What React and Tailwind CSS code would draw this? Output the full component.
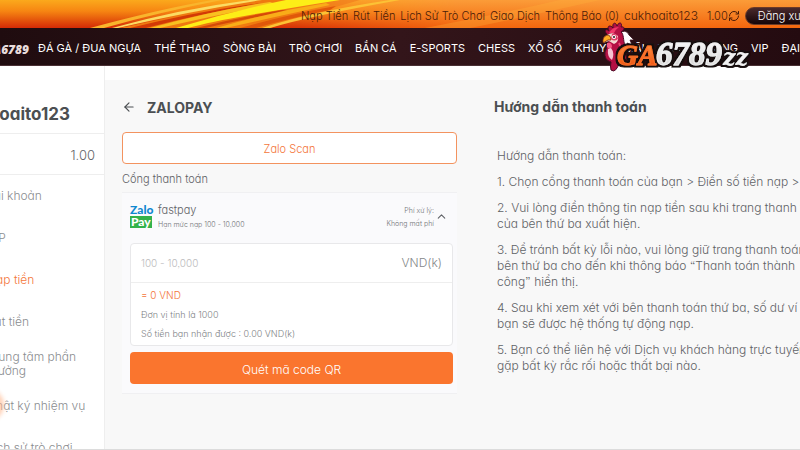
import { useState } from 'react';
import { ArrowLeft, ChevronUp, RefreshCw } from 'lucide-react';

const topLinks = ['Nạp Tiền', 'Rút Tiền', 'Lịch Sử Trò Chơi', 'Giao Dịch', 'Thông Báo (0)'];

const navLinks = [
  'ĐÁ GÀ / ĐUA NGỰA',
  'THỂ THAO',
  'SÒNG BÀI',
  'TRÒ CHƠI',
  'BẮN CÁ',
  'E-SPORTS',
  'CHESS',
  'XỔ SỐ',
  'KHUYẾN MÃI',
  'TẢI ỨNG DỤNG',
  'VIP',
  'ĐẠI LÝ',
];

const sideLinks = [
  { label: 'Tài khoản' },
  { label: 'VIP' },
  { label: 'Nạp tiền', active: true },
  { label: 'Rút tiền' },
  { label: 'Trung tâm phần thưởng' },
  { label: 'Nhật ký nhiệm vụ' },
  { label: 'Lịch sử trò chơi' },
];

const steps = [
  ['Hướng dẫn thanh toán:'],
  ['1. Chọn cổng thanh toán của bạn > Điền số tiền nạp >'],
  ['2. Vui lòng điền thông tin nạp tiền sau khi trang thanh toán', 'của bên thứ ba xuất hiện.'],
  ['3. Để tránh bất kỳ lỗi nào, vui lòng giữ trang thanh toán', 'bên thứ ba cho đến khi thông báo “Thanh toán thành', 'công” hiển thị.'],
  ['4. Sau khi xem xét với bên thanh toán thứ ba, số dư ví của', 'bạn sẽ được hệ thống tự động nạp.'],
  ['5. Bạn có thể liên hệ với Dịch vụ khách hàng trực tuyến', 'gặp bất kỳ rắc rối hoặc thất bại nào.'],
];

function FlameBackground() {
  return (
    <svg className="absolute inset-0 w-full h-full" viewBox="0 0 800 28" preserveAspectRatio="none" aria-hidden="true">
      <defs>
        <linearGradient id="base" x1="0" y1="0" x2="0" y2="1">
          <stop offset="0" stopColor="#fba91c" />
          <stop offset="0.4" stopColor="#f68512" />
          <stop offset="1" stopColor="#d42a06" />
        </linearGradient>
        <linearGradient id="right" x1="0" y1="0" x2="0" y2="1">
          <stop offset="0" stopColor="#fb9c38" />
          <stop offset="1" stopColor="#f3660e" />
        </linearGradient>
        <linearGradient id="fade" x1="0" y1="0" x2="1" y2="0">
          <stop offset="0" stopColor="#fff" stopOpacity="0" />
          <stop offset="0.35" stopColor="#fff" />
        </linearGradient>
        <mask id="rightMask">
          <rect x="270" width="530" height="28" fill="url(#fade)" />
        </mask>
      </defs>
      <rect width="800" height="28" fill="url(#base)" />
      <path d="M120 28 L250 0 H360 Q310 14 270 28Z" fill="#ef7a10" />
      <rect x="270" width="530" height="28" fill="url(#right)" mask="url(#rightMask)" />
      <path d="M90 28 Q160 9 212 0 H222 Q160 12 104 28Z" fill="#f9b52c" />
      <path d="M112 28 Q180 9 250 0 L262 0 Q190 11 118 28Z" fill="#fbdc62" />
      <path d="M130 28 Q190 13 246 5 L262 3 Q200 14 146 28Z" fill="#d23a06" />
      <path d="M150 28 Q215 10 270 2 L276 4 Q220 14 160 28Z" fill="#f9c020" />
      <path d="M176 28 Q232 11 286 0 H340 Q290 8 250 15 T188 28Z" fill="#fdee17" />
      <path d="M196 28 Q240 17 282 10 L290 11 Q240 20 206 28Z" fill="#d54a08" />
      <path d="M216 28 Q270 12 326 3 L330 5 Q270 18 226 28Z" fill="#f9ad18" />
      <path d="M240 28 Q290 14 336 6 L330 10 Q290 18 256 28Z" fill="#e0580a" />
      <path d="M262 28 Q310 12 390 0 H400 Q310 16 270 28Z" fill="#fcc235" />
      <path d="M425 28 Q500 14 560 0 H600 Q520 18 470 28Z" fill="#ffb23d" opacity="0.3" />
    </svg>
  );
}

function RoosterLogo() {
  return (
    <svg width="158" height="54" viewBox="0 0 158 54" role="img" aria-label="GA6789zz">
      <defs>
        <linearGradient id="ga" x1="0" y1="0" x2="0" y2="1">
          <stop offset="0" stopColor="#ff9a4a" />
          <stop offset="1" stopColor="#ed4a0a" />
        </linearGradient>
        <linearGradient id="num" x1="0" y1="0" x2="0" y2="1">
          <stop offset="0" stopColor="#ffffff" />
          <stop offset="1" stopColor="#cfcfcf" />
        </linearGradient>
        <filter id="outline" x="-5%" y="-20%" width="110%" height="140%">
          <feMorphology in="SourceAlpha" operator="dilate" radius="2" result="grown" />
          <feFlood floodColor="#17100f" />
          <feComposite in2="grown" operator="in" result="edge" />
          <feMerge>
            <feMergeNode in="edge" />
            <feMergeNode in="SourceGraphic" />
          </feMerge>
        </filter>
      </defs>
      <path d="M18 12 Q26 6 29 13 L34 18 L30 18 L32 23 L27 21 L28 26 L18 28Z" fill="#fff" stroke="#3d1320" strokeWidth="0.8" />
      <path d="M8 13 C3 9 6 6 9 9 C6 3 11 3 13 6 C12 0 16 0 17 4 C19 -1 23 1 21 5 C25 4 25 8 21 10 C24 12 23 18 25 24 L27 40 Q22 44 20 39 Q16 52 11 48 Q10 44 11 40 Q4 38 5 30 L8 23Z" fill="#b41043" stroke="#4b0a25" />
      <path d="M9 11 Q12 5 19 5 Q15 8 14 11Z" fill="#f0386a" />
      <path d="M7 13 Q13 9 18 14 Q19 20 14 22 L9 19 L3 21 Q2 15 7 13Z" fill="#f3d9d0" />
      <path d="M7 13 Q11 13 11 18 L8 18 L3 21 Q2 15 7 13Z" fill="#ffab24" stroke="#71200b" strokeWidth="0.8" />
      <path d="M12 12 Q17 11 18 17 Q14 20 11 17Z" fill="#e23a68" />
      <path d="M7 21 Q12 20 12 25 Q10 28 7 25Z" fill="#f55783" />
      <circle cx="14" cy="15" r="2" fill="#fff" />
      <circle cx="14" cy="15" r="1" fill="#201014" />
      <path d="M8 27 Q7 35 12 38 Q15 31 11 26Z" fill="#f7c3d2" />
      <path d="M19 21 Q22 26 20 34" fill="none" stroke="#ee4877" strokeWidth="2" />
      <g fontFamily="Liberation Serif, serif" fontWeight="700" fontStyle="italic" strokeLinejoin="round" filter="url(#outline)">
        <text x="17" y="43" fontSize="29" fill="url(#ga)" stroke="#f9702a" strokeWidth="1">GA</text>
        <text x="56" y="43" fontSize="33" fill="url(#num)" stroke="#f0f0f0" strokeWidth="1">6789</text>
        <text x="123" y="43" fontSize="22" fontFamily="DejaVu Serif, serif" fill="#f2f2f2">zz</text>
      </g>
    </svg>
  );
}

function Header() {
  return (
    <header className="relative whitespace-nowrap">
      <div className="relative h-7 overflow-hidden">
        <FlameBackground />
        <div className="relative flex items-center gap-[5px] h-7 pt-1 pl-[301px] text-[11px] text-[#4a1c08]">
          {topLinks.map(link => (
            <a key={link} href="#" className="shrink-0">{link}</a>
          ))}
          <span className="shrink-0 text-[12px]">cukhoaito123</span>
          <span className="shrink-0 flex items-center pl-1">
            1.00
            <button type="button" aria-label="Làm mới"><RefreshCw size={12} /></button>
          </span>
          <button type="button" className="shrink-0 h-[18px] px-3 rounded-full border border-[#6b3a28] bg-gradient-to-b from-[#4a2a2c] to-[#170609] text-white">
            Đăng xuất
          </button>
        </div>
      </div>
      <nav className="flex items-center h-[38px] pt-[3px] gap-[13px] overflow-hidden border-b border-[#4a3034] bg-gradient-to-r from-[#1f0c0f] via-[#33151a] to-[#240b10] text-[11px] font-normal text-white">
        <a href="#" className="flex justify-end shrink-0 w-[29px] -mr-1 pt-1 font-['Open_Sans',sans-serif] text-[12px] font-extrabold italic text-[#e8dcdc]">GA6789</a>
        {navLinks.map(link => (
          <a key={link} href="#" className="shrink-0">{link}</a>
        ))}
      </nav>
      <div className="absolute left-[600px] top-[22px]">
        <RoosterLogo />
      </div>
    </header>
  );
}

function Sidebar() {
  return (
    <aside className="relative w-[105px] shrink-0 overflow-hidden border-r border-[#eeeeee] pt-7 whitespace-nowrap">
      <div className="flex justify-end h-10 pt-2 pr-[34px] text-[17px] font-bold text-[#4b4f52] border-b border-[#eeeeee]">cukhoaito123</div>
      <div className="flex items-center justify-end h-[41px] pt-1 pr-[9px] text-[13px] text-[#626567] border-b border-[#eeeeee]">1.00</div>
      <ul className="-ml-[13px]">
        {sideLinks.map(item => (
          <li key={item.label} className="flex items-center h-[42px] text-[12px] leading-[14px]">
            <a href="#" className={item.active ? 'text-[#f4763a]' : 'w-[100px] whitespace-normal text-[#8a8d90]'}>{item.label}</a>
          </li>
        ))}
      </ul>
      <div className="absolute -left-7 top-[323px] w-8 h-8 rounded-full bg-[#ffb58a] opacity-60 blur-[2px]" />
    </aside>
  );
}

function PaymentForm() {
  const [amount, setAmount] = useState('');

  return (
    <section className="text-[#5f6266]">
      <h1 className="flex items-center gap-2 h-5 text-[14px] font-bold text-[#4b4f52]">
        <button type="button" aria-label="Quay lại" className="w-[17px]"><ArrowLeft size={14} /></button>
        ZALOPAY
      </h1>
      <button type="button" className="w-full h-8 mt-[15px] pt-[3px] rounded border border-[#f3935f] bg-white text-[11px] text-[#f4763a]">
        Zalo Scan
      </button>
      <p className="mt-[7px] h-4 leading-4 text-[11px]">Cổng thanh toán</p>
      <div className="mt-[5px] p-2 pt-[11px] pr-1 border-y border-[#f0f0f2] bg-[#fafafc]">
        <div className="flex items-start">
          <div className="flex flex-col items-start w-7 font-['Lato',sans-serif] font-black text-[12px] leading-[12px]">
            <span className="text-[#0f88d0]">Zalo</span>
            <span className="px-px bg-[#33b24a] text-white">Pay</span>
          </div>
          <div className="flex-1">
            <p className="text-[11px] leading-[13px]">fastpay</p>
            <p className="text-[7px] leading-4 text-[#707376]">Hạn mức nạp 100 - 10,000</p>
          </div>
          <div className="text-right text-[7px] leading-[13px] text-[#707376]">
            <p>Phí xử lý:</p>
            <p>Không mất phí</p>
          </div>
          <ChevronUp size={13} strokeWidth={2} className="mt-[6px] mr-[5px] ml-px" />
        </div>
        <div className="mt-[10px] rounded border border-[#e8e8ea] bg-white">
          <div className="flex items-center justify-between h-[39px] px-[10px] border-b border-[#eeeeee]">
            <input
              id="amount"
              value={amount}
              onChange={e => setAmount(e.target.value)}
              placeholder="100 - 10,000"
              className="min-w-0 flex-1 text-[10px] outline-none placeholder:text-[#bcbcbe]"
            />
            <label htmlFor="amount" className="text-[12px] text-[#85888a]">VND(k)</label>
          </div>
          <div className="h-[62px] px-[10px] pt-[3px] text-[9px] leading-[19px] text-[#808386]">
            <p className="text-[10px] text-[#f4763a]">= {Number(amount) * 1000} VND</p>
            <p>Đơn vị tính là 1000</p>
            <p>Số tiền bạn nhận được : {Number(amount).toFixed(2)} VND(k)</p>
          </div>
        </div>
        <div className="mt-[6px] mb-px">
          <button type="button" className="w-full h-8 pt-[3px] rounded bg-[#fa752e] text-[12px] text-white">Quét mã code QR</button>
        </div>
      </div>
    </section>
  );
}

function Guide() {
  return (
    <section className="min-w-0 whitespace-nowrap">
      <h2 className="h-5 leading-5 text-[14px] font-bold text-[#4b4f52]">Hướng dẫn thanh toán</h2>
      <div className="mt-[31px] ml-[3px] flex flex-col gap-[10px] text-[12px] leading-4 text-[#5f6266]">
        {steps.map(lines => (
          <div key={lines[0]}>
            {lines.map(line => <p key={line}>{line}</p>)}
          </div>
        ))}
      </div>
    </section>
  );
}

export default function App() {
  return (
    <div className="flex flex-col h-screen overflow-hidden bg-white font-['Inter',sans-serif] font-light [font-feature-settings:'cv11','ss03']">
      <Header />
      <div className="flex flex-1 min-h-0 border-b border-[#dcdcdc]">
        <Sidebar />
        <main className="flex-1 min-w-0 mt-[14px] pt-[17px] pl-[17px] overflow-hidden bg-[#f8f8f8] grid grid-cols-[minmax(0,335fr)_minmax(0,306fr)] gap-[37px]">
          <PaymentForm />
          <Guide />
        </main>
      </div>
    </div>
  );
}
